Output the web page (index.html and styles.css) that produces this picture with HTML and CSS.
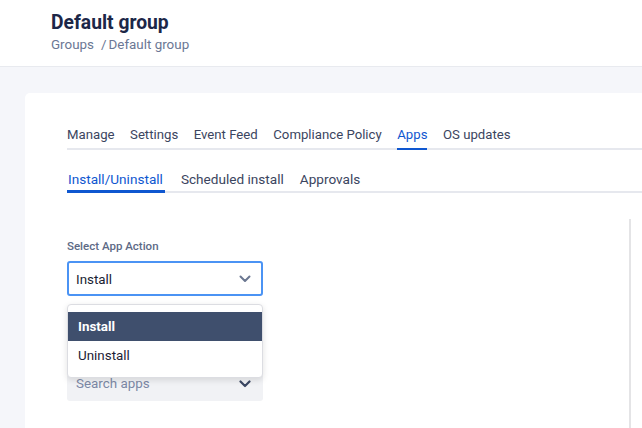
FILE: index.html
```html
<!DOCTYPE html>
<html>
<head>
<meta charset="utf-8">
<link rel="stylesheet" href="styles.css">
</head>
<body>
<header class="page-header">
  <h1 class="title">Default group</h1>
  <div class="breadcrumb"><span class="crumb">Groups</span><span class="crumb-sep">/</span><span class="crumb">Default group</span></div>
</header>
<main class="content">
  <section class="card">
    <nav class="tabs">
      <span class="tab">Manage</span>
      <span class="tab">Settings</span>
      <span class="tab">Event Feed</span>
      <span class="tab">Compliance Policy</span>
      <span class="tab active">Apps</span>
      <span class="tab">OS updates</span>
    </nav>
    <nav class="subtabs">
      <span class="subtab active">Install/Uninstall</span>
      <span class="subtab">Scheduled install</span>
      <span class="subtab">Approvals</span>
    </nav>
    <div class="body">
      <div class="form">
        <label class="label">Select App Action</label>
        <div class="select-wrap">
          <div class="select focused">
            <span class="value">Install</span>
            <svg class="chev" width="12" height="8" viewBox="0 0 12 8"><path d="M1.5 1.5 L6 6 L10.5 1.5" fill="none" stroke="#6b7791" stroke-width="2" stroke-linecap="round" stroke-linejoin="round"/></svg>
          </div>
          <div class="menu">
            <div class="option selected">Install</div>
            <div class="option">Uninstall</div>
          </div>
        </div>
        <div class="select search">
          <span class="placeholder">Search apps</span>
          <svg class="chev" width="12" height="8" viewBox="0 0 12 8"><path d="M1.5 1.5 L6 6 L10.5 1.5" fill="none" stroke="#3b4763" stroke-width="2.2" stroke-linecap="round" stroke-linejoin="round"/></svg>
        </div>
      </div>
      <div class="divider"></div>
    </div>
  </section>
</main>
</body>
</html>
```
FILE: styles.css
```css
* { box-sizing: border-box; }
html, body { margin: 0; padding: 0; height: 100%; overflow: hidden; }
body {
  font-family: Roboto, "Noto Sans", sans-serif;
  background: #f5f6fa;
  color: #1f2a44;
}
.page-header {
  background: #fff;
  height: 67px;
  border-bottom: 1px solid #e8eaef;
  padding: 11px 0 0 51px;
}
.title {
  margin: 0;
  font-size: 19.3px;
  font-weight: 700;
  color: #1c2748;
  line-height: 24px;
}
.breadcrumb {
  margin-top: 2px;
  font-size: 13.4px;
  color: #6b7794;
  line-height: 16px;
}
.crumb-sep { margin: 0 2px 0 7px; }
.content { padding: 26px 0 0 25px; }
.card {
  background: #fff;
  border-radius: 5px 0 0 0;
  height: 335px;
  padding: 34px 0 0 42px;
}
.tabs, .subtabs {
  display: flex;
  border-bottom: 2px solid #e6e8ee;
}
.tabs { gap: 15.5px; }
.subtabs { gap: 15px; margin-top: 21px; }
.tab, .subtab {
  font-size: 13.2px;
  color: #3b4560;
  line-height: 16px;
  padding-bottom: 5px;
  margin-bottom: -2px;
  border-bottom: 2px solid transparent;
}
.subtab { font-size: 13.6px; padding-left: 1px; padding-bottom: 4px; }
.tab.active, .subtab.active {
  color: #0f57d0;
  border-bottom-color: #0f57d0;
}
.subtab.active { border-bottom-width: 3px; padding-bottom: 3px; padding-right: 2px; }
.body { display: flex; justify-content: space-between; padding-top: 26px; }
.form { width: 196px; padding-top: 20px; }
.label {
  display: block;
  font-size: 11.5px;
  font-weight: 500;
  color: #5d6a86;
  line-height: 14px;
}
.select-wrap { position: relative; margin-top: 8px; }
.select {
  height: 35px;
  border-radius: 3px;
  display: flex;
  align-items: center;
  justify-content: space-between;
  padding: 0 12px 0 9px;
  font-size: 13.4px;
}
.select.focused { border: 2px solid #4b93f4; padding-left: 7px; padding-right: 10px; color: #1a1d33; }
.select.focused .value { margin-top: 1px; }
.search {
  background: #f1f2f5;
  margin-top: 70px;
  color: #7c88a5;
}
.menu {
  position: absolute;
  top: 43px;
  left: 0;
  width: 196px;
  background: #fff;
  border: 1px solid #dcdde2;
  border-radius: 4px;
  box-shadow: 0 2px 6px rgba(0,0,0,0.12);
  padding: 7px 0 7px;
  z-index: 2;
}
.option {
  height: 29px;
  line-height: 29px;
  padding-left: 10px;
  font-size: 13.4px;
  color: #1e2236;
}
.option.selected { background: #3f4f6d; color: #fff; font-weight: 700; }
.divider {
  width: 2px;
  background: #e4e4e6;
  height: 210px;
  margin-right: 11px;
}
```
